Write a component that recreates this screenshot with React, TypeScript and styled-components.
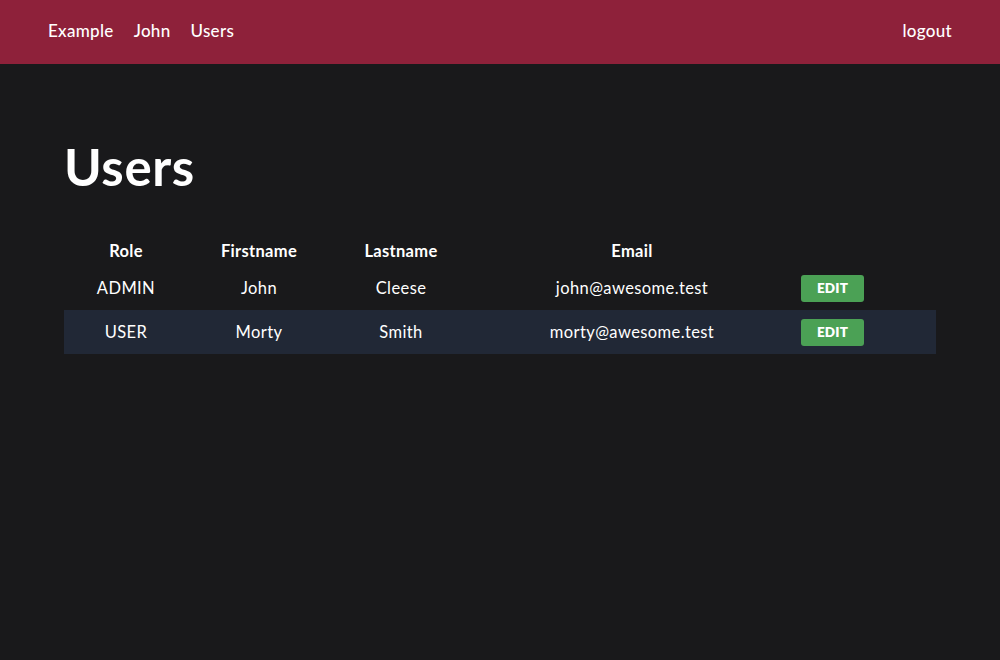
import React from 'react'
import styled, { createGlobalStyle } from 'styled-components'

const GlobalStyle = createGlobalStyle`
  html, body {
    margin: 0;
    padding: 0;
    background: #19191b;
    color: #ffffff;
    font-family: Lato, 'Open Sans', sans-serif;
  }
`

const Page = styled.div`
  min-height: 660px;
  background: #19191b;
`

const NavBar = styled.nav`
  height: 64px;
  box-sizing: border-box;
  padding: 0 48px 4px;
  background: #8e213a;
  display: flex;
  align-items: center;
  justify-content: space-between;
`

const NavGroup = styled.div`
  display: flex;
  gap: 20px;
`

const NavLink = styled.a`
  color: #ffffff;
  font-size: 17px;
  font-weight: 500;
  letter-spacing: 0.3px;
  text-decoration: none;
  cursor: pointer;
`

const Main = styled.main`
  padding: 74px 64px 0;
`

const Title = styled.h1`
  margin: 0 0 40px;
  font-size: 51px;
  font-weight: 700;
  letter-spacing: 0.6px;
  line-height: 58px;
`

const Table = styled.table`
  width: 100%;
  border-collapse: collapse;
  table-layout: fixed;
`

const HeadCell = styled.th<{ $width: number }>`
  width: ${props => props.$width}px;
  height: 30px;
  font-size: 16.5px;
  font-weight: 700;
  letter-spacing: 0.3px;
  text-align: center;
  vertical-align: middle;
  padding: 0;
`

const Row = styled.tr`
  height: 44px;
  &:nth-child(even) {
    background: #212836;
  }
`

const Cell = styled.td<{ $align?: string }>`
  font-size: 16.5px;
  letter-spacing: 0.4px;
  text-align: ${props => props.$align || 'center'};
  vertical-align: middle;
  padding: 0;
`

const EditButton = styled.button`
  margin-left: 9px;
  width: 63px;
  height: 27px;
  border: none;
  border-radius: 3px;
  background: #4ba155;
  color: #ffffff;
  font-family: inherit;
  font-size: 13.5px;
  font-weight: 800;
  letter-spacing: 0.2px;
  cursor: pointer;
`

const users = [
  { role: 'ADMIN', firstname: 'John', lastname: 'Cleese', email: 'john@awesome.test' },
  { role: 'USER', firstname: 'Morty', lastname: 'Smith', email: 'morty@awesome.test' },
]

const columns = [
  { label: 'Role', width: 124 },
  { label: 'Firstname', width: 142 },
  { label: 'Lastname', width: 142 },
  { label: 'Email', width: 320 },
  { label: '', width: 144 },
]

export default function App() {
  return (
    <Page>
      <GlobalStyle />
      <NavBar>
        <NavGroup>
          <NavLink>Example</NavLink>
          <NavLink>John</NavLink>
          <NavLink>Users</NavLink>
        </NavGroup>
        <NavLink>logout</NavLink>
      </NavBar>
      <Main>
        <Title>Users</Title>
        <Table>
          <thead>
            <tr>
              {columns.map(c => (
                <HeadCell key={c.label || 'actions'} $width={c.width}>
                  {c.label}
                </HeadCell>
              ))}
            </tr>
          </thead>
          <tbody>
            {users.map(u => (
              <Row key={u.email}>
                <Cell>{u.role}</Cell>
                <Cell>{u.firstname}</Cell>
                <Cell>{u.lastname}</Cell>
                <Cell>{u.email}</Cell>
                <Cell $align='left'>
                  <EditButton>EDIT</EditButton>
                </Cell>
              </Row>
            ))}
          </tbody>
        </Table>
      </Main>
    </Page>
  )
}
